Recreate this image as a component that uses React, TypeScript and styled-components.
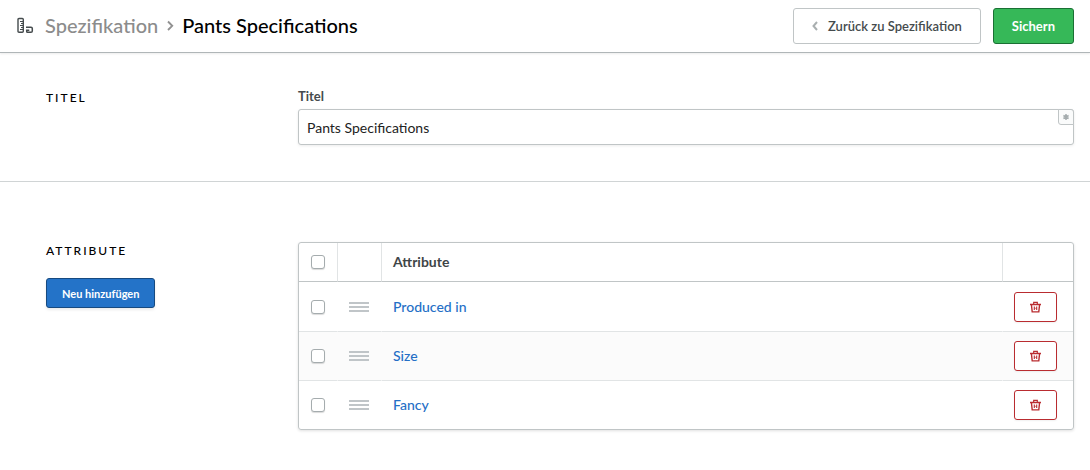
import React from "react";
import styled, { createGlobalStyle } from "styled-components";

const GlobalStyle = createGlobalStyle`
  *, *::before, *::after { box-sizing: border-box; }
  body {
    margin: 0;
    background: #fff;
    color: #000;
    font-family: Lato, "Liberation Sans", sans-serif;
    font-size: 14px;
    line-height: 20px;
  }
`;

const Header = styled.header`
  display: flex;
  align-items: center;
  justify-content: space-between;
  gap: 16px;
  padding: 8px 16px;
  border-bottom: 1px solid #b0b6b8;
  box-shadow: 0 1px 2px rgba(0, 0, 0, 0.08);
`;

const Breadcrumb = styled.nav`
  display: flex;
  align-items: center;
  padding-bottom: 2px;
  font-size: 20px;
  line-height: 24px;
`;

const RulerIcon = styled.svg`
  width: 18px;
  height: 18px;
  margin-right: 11px;
`;

const ParentLink = styled.a`
  color: #8c8c8c;
  font-weight: 500;
  text-decoration: none;
`;

const Separator = styled.svg`
  width: 8px;
  height: 12px;
  margin: 0 8px;
`;

const PageTitle = styled.h1`
  margin: 0;
  font: inherit;
  font-weight: 500;
`;

const Actions = styled.div`
  display: flex;
  gap: 12px;
`;

const variants = {
  plain: "background: #fff; border-color: #c0c5c6; color: #454b4d; font-weight: 600;",
  success: "background: #36b858; border-color: #1a7034; color: #fff;",
  primary: "background: #2473c8; border-color: #174a80; color: #fff; box-shadow: 0 2px 3px rgba(0, 0, 0, 0.08);",
  danger: "background: #fff; border-color: #b92c30; color: #b92c30; box-shadow: 0 1px 2px rgba(0, 0, 0, 0.06);",
};

const Button = styled.button<{ $variant: keyof typeof variants; $small?: boolean }>`
  display: flex;
  align-items: center;
  justify-content: center;
  height: ${(p) => (p.$small ? 30 : 36)}px;
  padding: 0 ${(p) => (p.$small ? 15 : 18)}px;
  border: 1px solid;
  border-radius: 3px;
  font-family: inherit;
  font-size: ${(p) => (p.$small ? 11 : 13)}px;
  font-weight: 700;
  cursor: pointer;
  ${(p) => variants[p.$variant]}
`;

const BackIcon = styled.svg`
  width: 6px;
  height: 10px;
  margin-right: 10px;
`;

const Section = styled.section<{ $divided?: boolean }>`
  display: grid;
  grid-template-columns: 252px minmax(0, 1fr);
  padding: ${(p) => (p.$divided ? "36px 16px 36px 46px" : "60px 16px 40px 46px")};
  border-bottom: ${(p) => (p.$divided ? "1px solid #d0d4d5" : "0")};
`;

const Aside = styled.div`
  display: flex;
  flex-direction: column;
  align-items: flex-start;
  gap: 18px;
`;

const SectionTitle = styled.h2`
  margin: 0;
  font-size: 12px;
  font-weight: 500;
  line-height: 18px;
  letter-spacing: 2px;
  text-transform: uppercase;
`;

const FieldLabel = styled.label`
  display: block;
  line-height: 14px;
  margin-bottom: 6px;
  font-size: 13px;
  font-weight: 700;
  color: #454b4d;
`;

const InputWrap = styled.div`
  position: relative;
`;

const TextInput = styled.input`
  display: block;
  width: 100%;
  height: 36px;
  padding: 0 8px;
  border: 1px solid #c0c5c6;
  border-radius: 3px;
  background: #fff;
  box-shadow: 0 1px 3px rgba(0, 0, 0, 0.08);
  color: #222;
  font-family: inherit;
  font-size: 14px;
  font-weight: 400;
`;

const RequiredMark = styled.span`
  position: absolute;
  top: 0;
  right: 0;
  display: grid;
  place-items: center;
  width: 16px;
  height: 16px;
  border: 1px solid #c0c5c6;
  border-radius: 0 3px 0 3px;
  background: #fafbfb;
`;

const TableFrame = styled.div`
  border: 1px solid #c0c5c6;
  border-radius: 3px;
  box-shadow: 0 1px 3px rgba(0, 0, 0, 0.12);
  overflow: hidden;
`;

const Table = styled.table`
  width: 100%;
  border-collapse: separate;
  border-spacing: 0;
  table-layout: fixed;
`;

const HeadCell = styled.th<{ $width?: number }>`
  width: ${(p) => (p.$width ? `${p.$width}px` : "auto")};
  height: 39px;
  padding: 0 11px;
  border-bottom: 1px solid #c0c5c6;
  border-right: 1px solid #e1e4e5;
  text-align: left;
  font-size: 14px;
  font-weight: 700;
  color: #3f4547;
  &:last-child { border-right: 0; }
`;

const Cell = styled.td`
  height: 49px;
  padding: 0 11px;
  border-right: 1px solid transparent;
  &:last-child { border-right: 0; }
`;

const Row = styled.tr`
  &:nth-child(even) { background: #fbfbfb; }
  &:not(:first-child) > td { border-top: 1px solid #e1e4e5; }
`;

const Checkbox = styled.input`
  appearance: none;
  display: block;
  width: 14px;
  height: 14px;
  margin: 0 auto;
  border: 1px solid #a5acae;
  border-radius: 3px;
  background: #fff;
  box-shadow: 0 1px 1px rgba(0, 0, 0, 0.15);
  &:checked { background: #2473c8; }
`;

const Handle = styled.svg`
  display: block;
  width: 20px;
  height: 10px;
`;

const AttributeLink = styled.a`
  color: #246fc6;
  font-size: 14px;
  font-weight: 500;
  text-decoration: none;
`;

const TrashIcon = styled.svg`
  width: 11px;
  height: 12px;
`;

const attributes = ["Produced in", "Size", "Fancy"];

export default function App() {
  return (
    <>
      <GlobalStyle />
      <Header>
        <Breadcrumb>
          <RulerIcon viewBox="0 0 18 18" fill="none" stroke="#454b4d" aria-hidden="true">
            <path strokeWidth="1.4" d="M3 2.5H6.3Q7.3 2.5 7.3 3.5V15.3Q7.3 16.3 6.3 16.3H3Q2 16.3 2 15.3V3.5Q2 2.5 3 2.5Z" />
            <path d="M4 5.5H7M5 7.5H7M4 9.5H7M5 11.5H7M4 13.5H7" />
            <path strokeWidth="1.5" d="M10 11.2H15Q16.3 11.2 16.3 12.5V15Q16.3 16.3 15 16.3H11.5Q10.7 16.3 10.7 15.4V14.2H13.3" />
          </RulerIcon>
          <ParentLink href="#spezifikation">Spezifikation</ParentLink>
          <Separator viewBox="0 0 8 12" fill="none" stroke="#919191" strokeWidth="1.9" aria-hidden="true">
            <path d="M2 2.5L6.2 6.8L2 11" />
          </Separator>
          <PageTitle>Pants Specifications</PageTitle>
        </Breadcrumb>
        <Actions>
          <Button type="button" $variant="plain">
            <BackIcon viewBox="0 0 6 10" fill="none" stroke="#a9afb0" strokeWidth="2" aria-hidden="true">
              <path d="M5 1L1.5 5L5 9" />
            </BackIcon>
            Zurück zu Spezifikation
          </Button>
          <Button type="submit" $variant="success">Sichern</Button>
        </Actions>
      </Header>
      <main>
        <Section $divided>
          <Aside>
            <SectionTitle>Titel</SectionTitle>
          </Aside>
          <div>
            <FieldLabel htmlFor="title">Titel</FieldLabel>
            <InputWrap>
              <TextInput id="title" type="text" defaultValue="Pants Specifications" required />
              <RequiredMark aria-hidden="true">
                <svg width="6" height="6" viewBox="0 0 6 6" stroke="#a5acae" strokeWidth="1.5">
                  <path d="M3 0V6M.4 1.5L5.6 4.5M5.6 1.5L.4 4.5" />
                </svg>
              </RequiredMark>
            </InputWrap>
          </div>
        </Section>
        <Section>
          <Aside>
            <SectionTitle>Attribute</SectionTitle>
            <Button type="button" $variant="primary" $small>Neu hinzufügen</Button>
          </Aside>
          <TableFrame>
            <Table>
              <thead>
                <tr>
                  <HeadCell $width={39}><Checkbox type="checkbox" aria-label="Alle auswählen" /></HeadCell>
                  <HeadCell $width={44} />
                  <HeadCell>Attribute</HeadCell>
                  <HeadCell $width={70} />
                </tr>
              </thead>
              <tbody>
                {attributes.map((name) => (
                  <Row key={name}>
                    <Cell><Checkbox type="checkbox" aria-label={name} /></Cell>
                    <Cell>
                      <Handle viewBox="0 0 20 10" fill="#c0c5c8" aria-hidden="true">
                        <path d="M0 0H20V2H0ZM0 4H20V6H0ZM0 8H20V10H0Z" />
                      </Handle>
                    </Cell>
                    <Cell><AttributeLink href={`#${name}`}>{name}</AttributeLink></Cell>
                    <Cell>
                      <Button type="button" $variant="danger" $small aria-label={`${name} löschen`}>
                        <TrashIcon viewBox="0 0 11 12" fill="none" stroke="currentColor" aria-hidden="true">
                          <path strokeWidth="1.4" d="M0 3.5H11M1.4 3.5L2.2 10.9H8.8L9.6 3.5" />
                          <path strokeWidth="1.2" d="M3.7 3V1.3H7.3V3" />
                          <path strokeWidth="1.1" d="M4.3 5.6V9M6.7 5.6V9" />
                          <path strokeWidth="0.6" d="M4.3 7.3H6.7" />
                        </TrashIcon>
                      </Button>
                    </Cell>
                  </Row>
                ))}
              </tbody>
            </Table>
          </TableFrame>
        </Section>
      </main>
    </>
  );
}
